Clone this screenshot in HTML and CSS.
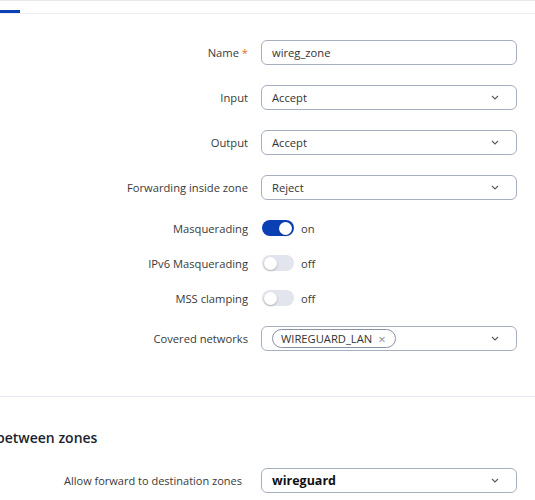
FILE: index.html
```html
<!DOCTYPE html>
<html lang="en">
<head>
  <meta charset="UTF-8">
  <meta name="viewport" content="width=device-width, initial-scale=1.0">
  <title>Zone settings</title>
  <link rel="stylesheet" href="styles.css">
</head>
<body>
  <div class="tabs">
    <span class="tab-active"></span>
  </div>

  <div class="form">
    <div class="row">
      <label>Name <span class="req">*</span></label>
      <div class="field">wireg_zone</div>
    </div>

    <div class="row">
      <label>Input</label>
      <div class="field select">
        <span>Accept</span>
        <svg class="chevron" width="8" height="5" viewBox="0 0 8 5"><path d="M1 1l3 3 3-3" fill="none" stroke="#555b6a" stroke-width="1.1"/></svg>
      </div>
    </div>

    <div class="row">
      <label>Output</label>
      <div class="field select">
        <span>Accept</span>
        <svg class="chevron" width="8" height="5" viewBox="0 0 8 5"><path d="M1 1l3 3 3-3" fill="none" stroke="#555b6a" stroke-width="1.1"/></svg>
      </div>
    </div>

    <div class="row">
      <label>Forwarding inside zone</label>
      <div class="field select">
        <span>Reject</span>
        <svg class="chevron" width="8" height="5" viewBox="0 0 8 5"><path d="M1 1l3 3 3-3" fill="none" stroke="#555b6a" stroke-width="1.1"/></svg>
      </div>
    </div>

    <div class="row toggle-row">
      <label>Masquerading</label>
      <div class="toggle-wrap">
        <span class="toggle on"><span class="knob"></span></span>
        <span>on</span>
      </div>
    </div>

    <div class="row toggle-row">
      <label>IPv6 Masquerading</label>
      <div class="toggle-wrap">
        <span class="toggle"><span class="knob"></span></span>
        <span>off</span>
      </div>
    </div>

    <div class="row toggle-row">
      <label>MSS clamping</label>
      <div class="toggle-wrap">
        <span class="toggle"><span class="knob"></span></span>
        <span>off</span>
      </div>
    </div>

    <div class="row networks-row">
      <label>Covered networks</label>
      <div class="field select">
        <span class="chip">WIREGUARD_LAN <span class="chip-x">&times;</span></span>
        <svg class="chevron" width="8" height="5" viewBox="0 0 8 5"><path d="M1 1l3 3 3-3" fill="none" stroke="#555b6a" stroke-width="1.1"/></svg>
      </div>
    </div>
  </div>

  <div class="section">
    <h3>between zones</h3>
    <div class="row row-wide">
      <label>Allow forward to destination zones</label>
      <div class="field select">
        <span class="bold">wireguard</span>
        <svg class="chevron" width="8" height="5" viewBox="0 0 8 5"><path d="M1 1l3 3 3-3" fill="none" stroke="#555b6a" stroke-width="1.1"/></svg>
      </div>
    </div>
  </div>
</body>
</html>
```

FILE: styles.css
```css
body {
  margin: 0;
  font-family: 'Open Sans', sans-serif;
  font-size: 11.2px;
  color: #3a3a3a;
  background-color: #fff;
  overflow: hidden;
}

.tabs {
  border-top: 1px solid #e8eaf0;
  border-bottom: 1px solid #eceef3;
  box-sizing: border-box;
  height: 14px;
  display: flex;
  align-items: flex-end;
}

.tab-active {
  width: 20px;
  height: 3px;
  background-color: #0b3fb4;
}

.form {
  padding: 26px 18px 45px 0;
  display: flex;
  flex-direction: column;
  border-bottom: 1px solid #e6e8ef;
}

.row {
  display: grid;
  grid-template-columns: 1fr 256px;
  column-gap: 13px;
  align-items: center;
  height: 25px;
  margin-bottom: 20px;
}

.row:last-child {
  margin-bottom: 0;
}

.row label {
  text-align: right;
}

.req {
  color: #e8702a;
}

.toggle-row {
  height: 16px;
  margin-bottom: 19px;
}

.networks-row {
  margin-top: 1px;
}

.field {
  box-sizing: border-box;
  height: 25px;
  border: 1px solid #a7aebd;
  border-radius: 6px;
  padding: 0 10px;
  display: flex;
  align-items: center;
  color: #333;
}

.select {
  justify-content: space-between;
}

.chevron {
  margin-right: 7px;
}

.toggle-wrap {
  display: flex;
  align-items: center;
  gap: 7px;
  padding-left: 1px;
}

.toggle {
  width: 32px;
  height: 16px;
  border-radius: 8px;
  background-color: #e2e5ed;
  display: flex;
  align-items: center;
  padding: 0 2px;
  box-sizing: border-box;
}

.knob {
  width: 13px;
  height: 13px;
  border-radius: 50%;
  background-color: #fff;
  box-shadow: 0 1px 2px rgba(0, 0, 0, 0.25);
}

.toggle.on {
  background-color: #0b40b5;
  justify-content: flex-end;
}

.chip {
  border: 1px solid #8a92a6;
  border-radius: 10px;
  height: 19px;
  box-sizing: border-box;
  display: flex;
  align-items: center;
  padding: 0 9px 0 8px;
  gap: 6px;
}

.chip-x {
  color: #8a8f9c;
  font-size: 13px;
}

.section {
  padding: 0 18px 0 0;
}

.section h3 {
  margin: 31px 0 20px -4px;
  font-size: 14px;
  font-weight: 600;
  color: #1c1f2e;
  line-height: 20px;
}

.row-wide {
  column-gap: 19px;
}

.row-wide label {
  font-size: 11px;
}

.bold {
  font-weight: 700;
  font-size: 12.5px;
  color: #111;
}
```
